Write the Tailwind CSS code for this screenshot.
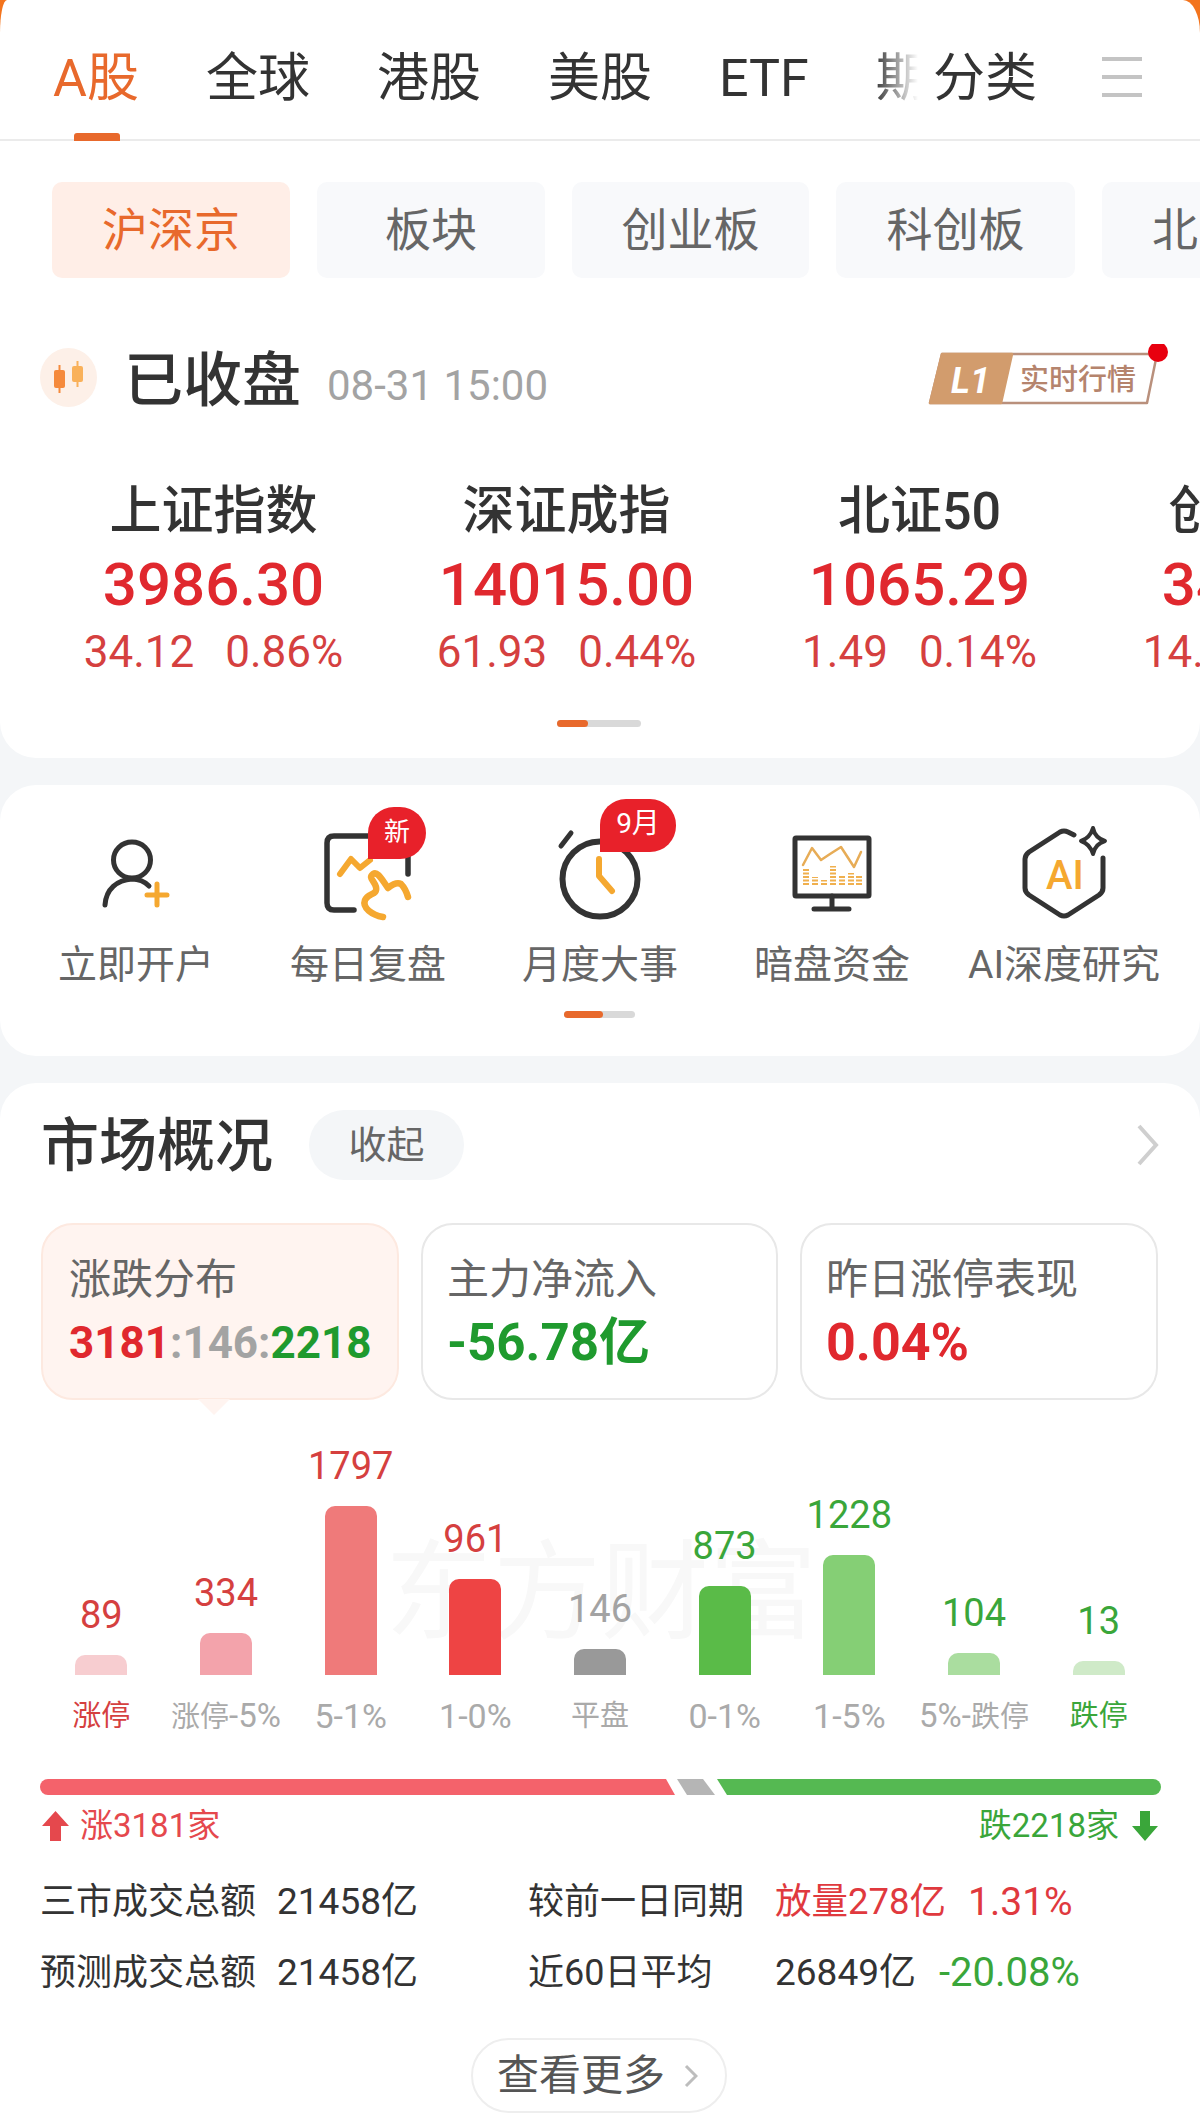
<!DOCTYPE html>
<html lang="zh-CN">
<head>
  <meta charset="UTF-8" />
  <meta name="viewport" content="width=device-width, initial-scale=1.0"/>
  <title>行情</title>
  <script src="https://cdn.jsdelivr.net/npm/@tailwindcss/browser@4"></script>
</head>
<body class="bg-[#f4f6f8]">
<div class="w-[1200px] h-[2128px] overflow-hidden bg-[#f4f6f8] text-[#333] font-['Roboto','Noto_Sans_CJK_SC',sans-serif]">

  <!-- top card -->
  <div class="bg-[linear-gradient(#f3741d_0,#f3741d_40px,#f4f6f8_40px)]">
    <section class="h-[758px] bg-white rounded-tl-[7px_33px] rounded-tr-[17px_33px] rounded-b-[36px] overflow-hidden">
      <header class="relative h-[141px] border-b-2 border-[#ebebeb] flex items-start pt-[46px] text-[52px] leading-[66px]">
        <div class="relative w-[918px] overflow-hidden flex gap-[67px] pl-[53px] whitespace-nowrap">
          <span class="text-[#e8692c]">A股</span>
          <span>全球</span>
          <span>港股</span>
          <span>美股</span>
          <span>ETF</span>
          <span>期货</span>
          <div class="absolute right-0 top-0 h-full w-[40px] bg-gradient-to-r from-white/10 to-white"></div>
        </div>
        <span class="ml-[15px]">分类</span>
        <div class="ml-[65px] mt-[11px] w-[40px] flex flex-col gap-[14px]">
          <div class="h-[4px] bg-[#c4c4c4]"></div>
          <div class="h-[4px] bg-[#c4c4c4]"></div>
          <div class="h-[4px] bg-[#c4c4c4]"></div>
        </div>
        <div class="absolute left-[74px] bottom-[-2px] w-[46px] h-[8px] rounded-t-[3px] bg-[#e8692c]"></div>
      </header>

      <div class="mt-[41px] pl-[52px] flex gap-[27px] h-[96px] text-[46px] text-[#666] whitespace-nowrap">
        <div class="w-[238px] shrink-0 rounded-[10px] bg-[#ffeee7] text-[#e8692c] flex items-center justify-center">沪深京</div>
        <div class="w-[228px] shrink-0 rounded-[10px] bg-[#f8f9fb] flex items-center justify-center">板块</div>
        <div class="w-[237px] shrink-0 rounded-[10px] bg-[#f8f9fb] flex items-center justify-center">创业板</div>
        <div class="w-[239px] shrink-0 rounded-[10px] bg-[#f8f9fb] flex items-center justify-center">科创板</div>
        <div class="w-[228px] shrink-0 rounded-[10px] bg-[#f8f9fb] flex items-center justify-start pl-[50px]">北交所</div>
      </div>

      <div class="relative mt-[70px] h-[59px] pl-[40px] flex items-center">
        <svg width="57" height="59" viewBox="40 348 57 59">
          <ellipse cx="68.5" cy="377.5" rx="28.5" ry="29.5" fill="#fdf0e8"/>
          <path d="M59.5 365v28" stroke="#f58a3c" stroke-width="2"/>
          <rect x="54" y="370" width="11" height="18" rx="2" fill="#f58a3c"/>
          <path d="M77.5 361v26" stroke="#f9b15a" stroke-width="2"/>
          <rect x="72" y="366" width="11" height="16" rx="2" fill="#f9b15a"/>
        </svg>
        <span class="ml-[27px] mt-[5px] text-[59px] leading-[59px] font-medium">已收盘</span>
        <span class="ml-[26px] mt-[16px] text-[42px] text-[#a3a3a3]">08-31 15:00</span>
        <svg class="absolute left-[925px] top-[-4px]" width="245" height="65" viewBox="925 343 245 65">
          <path d="M942 353H1157L1147 402H930Z" fill="#fff" stroke="#b9907c" stroke-width="2.5" stroke-linejoin="round"/>
          <path d="M942 353H1012L1001 402H930Z" fill="#d29c6d" stroke="#d29c6d" stroke-width="2.5" stroke-linejoin="round"/>
          <text x="951" y="392" font-size="36" font-weight="700" font-style="italic" fill="#fff">L1</text>
          <text x="1020" y="389" font-size="29" font-weight="500" fill="#b5846d">实时行情</text>
          <circle cx="1158" cy="351" r="10" fill="#e8000f"/>
        </svg>
      </div>

      <div class="mt-[75px] pl-[37px] flex whitespace-nowrap text-center">
        <div class="w-[353px] shrink-0">
          <div class="h-[56px] leading-[60px] text-[52px] font-medium">上证指数</div>
          <div class="mt-[11px] h-[70px] leading-[72px] text-[60px] font-medium text-[#e0282e]">3986.30</div>
          <div class="mt-[8px] h-[50px] leading-[50px] text-[44px] text-[#d5403f] flex justify-center gap-[31px]"><span>34.12</span><span>0.86%</span></div>
        </div>
        <div class="w-[353px] shrink-0">
          <div class="h-[56px] leading-[60px] text-[52px] font-medium">深证成指</div>
          <div class="mt-[11px] h-[70px] leading-[72px] text-[60px] font-medium text-[#e0282e]">14015.00</div>
          <div class="mt-[8px] h-[50px] leading-[50px] text-[44px] text-[#d5403f] flex justify-center gap-[31px]"><span>61.93</span><span>0.44%</span></div>
        </div>
        <div class="w-[353px] shrink-0">
          <div class="h-[56px] leading-[60px] text-[52px] font-medium">北证50</div>
          <div class="mt-[11px] h-[70px] leading-[72px] text-[60px] font-medium text-[#e0282e]">1065.29</div>
          <div class="mt-[8px] h-[50px] leading-[50px] text-[44px] text-[#d5403f] flex justify-center gap-[31px]"><span>1.49</span><span>0.14%</span></div>
        </div>
        <div class="w-[353px] shrink-0">
          <div class="h-[56px] leading-[60px] text-[52px] font-medium">创业板指</div>
          <div class="mt-[11px] h-[70px] leading-[72px] text-[60px] font-medium text-[#e0282e]">3412.56</div>
          <div class="mt-[8px] h-[50px] leading-[50px] text-[44px] text-[#d5403f] flex justify-center gap-[31px]"><span>14.85</span><span>0.44%</span></div>
        </div>
      </div>

      <div class="mt-[43px] mx-auto w-[84px] h-[7px] rounded-full bg-[#d9d9d9] translate-x-[-1px]">
        <div class="w-[31px] h-full rounded-full bg-[#e8692c]"></div>
      </div>
    </section>
  </div>

  <!-- quick entries -->
  <section class="mt-[27px] h-[271px] bg-white rounded-[36px] pt-[15px] px-[20px]">
    <div class="grid grid-cols-[repeat(5,232px)] text-center text-[39px] leading-[46px] text-[#666] whitespace-nowrap">
      <div class="relative">
        <svg class="block" width="232" height="125" viewBox="20 800 232 125" fill="none" stroke-linecap="round" stroke-linejoin="round">
          <ellipse cx="132" cy="860" rx="18.500" ry="18" stroke="#333" stroke-width="5"/>
          <path d="M105 905C106 889 117 880 132 879C139 879 145 882 149 886" stroke="#333" stroke-width="5"/>
          <path d="M157 884V905M147 895H167" stroke="#f5a830" stroke-width="5"/>
        </svg>
        <div class="mt-[17px]">立即开户</div>
      </div>
      <div class="relative">
        <svg class="block" width="232" height="125" viewBox="252 800 232 125" fill="none" stroke-linecap="round" stroke-linejoin="round">
          <path d="M354 910H334Q327 910 327 903V843Q327 836 334 836H400Q408 836 408 843V874" stroke="#333" stroke-width="5.500"/>
          <path d="M340 874L351 859L360 868L370 860" stroke="#f5a830" stroke-width="6"/>
          <path d="M383 917C372 915 362 908 365 900C368 893 378 895 376 887C374 880 368 878 373 874C378 871 382 880 388 888C393 884 397 882 401 884C404 887 406 890 408 897" stroke="#f5a830" stroke-width="6.500"/>
        </svg>
        <span class="absolute left-[116px] top-[7px] w-[58px] h-[52px] rounded-[29px] rounded-bl-none bg-[#e8212a] text-white text-[26px] leading-[50px]">新</span>
        <div class="mt-[17px]">每日复盘</div>
      </div>
      <div class="relative">
        <svg class="block" width="232" height="125" viewBox="484 800 232 125" fill="none" stroke-linecap="round" stroke-linejoin="round">
          <circle cx="600" cy="879" r="37.500" stroke="#333" stroke-width="6"/>
          <path d="M561 846L571 833" stroke="#333" stroke-width="5"/>
          <path d="M599 859V876L612 891" stroke="#f5a830" stroke-width="6"/>
        </svg>
        <span class="absolute left-[116px] top-[-1px] w-[76px] h-[53px] rounded-[26px] rounded-bl-none bg-[#e8212a] text-white text-[28px] leading-[50px]">9月</span>
        <div class="mt-[17px]">月度大事</div>
      </div>
      <div class="relative">
        <svg class="block" width="232" height="125" viewBox="716 800 232 125" fill="none" stroke-linecap="round" stroke-linejoin="round">
          <rect x="795" y="838" width="74" height="58" rx="1" stroke="#333" stroke-width="5"/>
          <path d="M832 896V908M814 909H849" stroke="#333" stroke-width="5"/>
          <path d="M803 865L812 848L821 860L830 854L841 847L854 867L861 852" stroke="#e7ac56" stroke-width="2.500"/>
          <g stroke="#f0b04e" stroke-width="6" stroke-dasharray="2 1.500" stroke-linecap="butt">
            <path d="M806 885V869"/><path d="M815 885V877"/><path d="M824 885V880"/><path d="M833 885V866"/><path d="M842 885V876"/><path d="M851 885V873"/><path d="M859 885V875"/>
          </g>
        </svg>
        <div class="mt-[17px]">暗盘资金</div>
      </div>
      <div class="relative">
        <svg class="block" width="232" height="125" viewBox="948 800 232 125" fill="none" stroke-linecap="round" stroke-linejoin="round">
          <path d="M1074 835L1068 832Q1064 830 1060 832L1029 852Q1025 855 1025 859V888Q1025 892 1029 895L1060 915Q1064 917 1068 915L1099 895Q1103 892 1103 888V858" stroke="#333" stroke-width="5"/>
          <path d="M1093 828Q1095 838 1105 841Q1095 844 1093 854Q1090 844 1081 841Q1090 838 1093 828Z" stroke="#333" stroke-width="4"/>
          <text x="1065" y="889" text-anchor="middle" font-size="40" font-weight="500" fill="#f5a830" stroke="none">AI</text>
        </svg>
        <div class="mt-[17px]">AI深度研究</div>
      </div>
    </div>
    <div class="mt-[23px] ml-[544px] w-[71px] h-[7px] rounded-full bg-[#d9d9d9]">
      <div class="w-[39px] h-full rounded-full bg-[#e8692c]"></div>
    </div>
  </section>

  <!-- market overview -->
  <section class="relative mt-[27px] h-[1045px] bg-white rounded-t-[36px] pt-[27px]">
    <div class="flex items-center h-[70px] pl-[41px]">
      <h2 class="mt-[3px] text-[58px] font-medium">市场概况</h2>
      <span class="ml-[36px] w-[155px] h-[70px] rounded-full bg-[#f4f6f8] text-[38px] text-[#666] flex items-center justify-center">收起</span>
      <svg class="ml-auto mr-[40px]" width="24" height="42" viewBox="0 0 24 42" fill="none"><path d="M3 2L20 21L3 40" stroke="#cfcfcf" stroke-width="4"/></svg>
    </div>

    <div class="relative mt-[43px] ml-[41px] grid grid-cols-[358px_357px_358px] gap-x-[22px] h-[177px]">
      <div class="relative rounded-[32px] border-2 border-[#fde9e0] bg-[#fff4f0] pl-[26px] pt-[30px]">
        <div class="text-[42px] leading-[50px] text-[#666]">涨跌分布</div>
        <div class="mt-[12px] text-[44px] leading-[52px] font-bold whitespace-nowrap"><span class="text-[#e0282e]">3181</span><span class="text-[#a3a3a3]">:146:</span><span class="text-[#1f9a2e]">2218</span></div>
        <div class="absolute left-[155px] bottom-[-17px] w-[32px] h-[16px] bg-[#fff4f0] [clip-path:polygon(0_0,100%_0,50%_100%)]"></div>
      </div>
      <div class="rounded-[32px] border-2 border-[#e8e8e8] pl-[24px] pt-[30px]">
        <div class="text-[42px] leading-[50px] text-[#666]">主力净流入</div>
        <div class="mt-[12px] text-[51px] leading-[52px] font-bold text-[#1f9a2e]">-56.78亿</div>
      </div>
      <div class="rounded-[32px] border-2 border-[#e8e8e8] pl-[24px] pt-[30px]">
        <div class="text-[42px] leading-[50px] text-[#666]">昨日涨停表现</div>
        <div class="mt-[12px] text-[52px] leading-[52px] font-bold text-[#e0282e]">0.04%</div>
      </div>
    </div>

    <!-- watermark under the bars -->
    <div class="absolute left-[385px] top-[450px] text-[108px] leading-[120px] text-[#f8f8f8] whitespace-nowrap">东方财富</div>

    <div class="relative ml-[39px] w-[1122px] h-[275px] grid grid-cols-9 items-end text-center text-[38px] leading-[38px]">
      <div class="flex flex-col items-center"><span class="mb-[21px] text-[#d5403f]">89</span><div class="w-[52px] h-[20px] rounded-t-[10px] bg-[#f7cdd0]"></div></div>
      <div class="flex flex-col items-center"><span class="mb-[21px] text-[#d5403f]">334</span><div class="w-[52px] h-[42px] rounded-t-[10px] bg-[#f3a3ab]"></div></div>
      <div class="flex flex-col items-center"><span class="mb-[21px] text-[#d5403f]">1797</span><div class="w-[52px] h-[169px] rounded-t-[10px] bg-[#ef7a7a]"></div></div>
      <div class="flex flex-col items-center"><span class="mb-[21px] text-[#d5403f]">961</span><div class="w-[52px] h-[96px] rounded-t-[10px] bg-[#ee4444]"></div></div>
      <div class="flex flex-col items-center"><span class="mb-[21px] text-[#a3a3a3]">146</span><div class="w-[52px] h-[26px] rounded-t-[10px] bg-[#999]"></div></div>
      <div class="flex flex-col items-center"><span class="mb-[21px] text-[#3aa63a]">873</span><div class="w-[52px] h-[89px] rounded-t-[10px] bg-[#5abb48]"></div></div>
      <div class="flex flex-col items-center"><span class="mb-[21px] text-[#3aa63a]">1228</span><div class="w-[52px] h-[120px] rounded-t-[10px] bg-[#85cf75]"></div></div>
      <div class="flex flex-col items-center"><span class="mb-[21px] text-[#3aa63a]">104</span><div class="w-[52px] h-[22px] rounded-t-[10px] bg-[#aadd9f]"></div></div>
      <div class="flex flex-col items-center"><span class="mb-[21px] text-[#3aa63a]">13</span><div class="w-[52px] h-[14px] rounded-t-[10px] bg-[#cfeac8]"></div></div>
    </div>

    <div class="relative ml-[39px] mt-[21px] w-[1122px] h-[40px] grid grid-cols-9 text-center text-[29px] leading-[40px] text-[#aaa] whitespace-nowrap">
      <span class="text-[#d5403f]">涨停</span>
      <span>涨停<span class="text-[33px]">-5%</span></span>
      <span class="text-[34px]">5-1%</span>
      <span class="text-[34px]">1-0%</span>
      <span>平盘</span>
      <span class="text-[34px]">0-1%</span>
      <span class="text-[34px]">1-5%</span>
      <span><span class="text-[33px]">5%-</span>跌停</span>
      <span class="text-[#3aa63a]">跌停</span>
    </div>

    <div class="relative mt-[43px] ml-[40px] w-[1121px] h-[16px] rounded-full overflow-hidden">
      <div class="absolute inset-y-0 left-0 w-[635px] bg-[#f4626b] [clip-path:polygon(0_0,626px_0,100%_100%,0_100%)]"></div>
      <div class="absolute inset-y-0 left-[637px] w-[38px] bg-[#b5b5b5] [clip-path:polygon(0_0,26px_0,100%_100%,10px_100%)]"></div>
      <div class="absolute inset-y-0 left-[677px] right-0 bg-[#55b952] [clip-path:polygon(0_0,100%_0,100%_100%,10px_100%)]"></div>
    </div>

    <div class="mt-[11px] h-[40px] px-[42px] flex items-center justify-between text-[33px] leading-[40px]">
      <div class="flex items-center text-[#e5484d]">
        <svg width="27" height="30" viewBox="0 0 27 30"><path d="M13.500 0L27 15H19V30H8V15H0Z" fill="#e5484d"/></svg>
        <span class="ml-[11px]">涨3181家</span>
      </div>
      <div class="flex items-center text-[#3aa63a]">
        <span class="mr-[13px]">跌2218家</span>
        <svg width="26" height="30" viewBox="0 0 26 30"><path d="M13 30L0 15H8V0H18V15H26Z" fill="#3aa63a"/></svg>
      </div>
    </div>

    <div class="mt-[32px] pl-[40px] grid grid-cols-[237px_251px_247px_1fr] gap-y-[23px] text-[36px] leading-[48px] whitespace-nowrap">
      <span>三市成交总额</span>
      <span class="text-[37px]">21458亿</span>
      <span>较前一日同期</span>
      <span class="flex gap-[22px] text-[#e0393e]"><span class="text-[36.5px]">放量278亿</span><span class="text-[39px]">1.31%</span></span>
      <span>预测成交总额</span>
      <span class="text-[37px]">21458亿</span>
      <span>近60日平均</span>
      <span class="flex gap-[23px]"><span class="text-[37px]">26849亿</span><span class="text-[40px] text-[#3aa63a]">-20.08%</span></span>
    </div>

    <div class="mt-[41px] ml-[471px] w-[256px] h-[75px] rounded-full border-2 border-[#eeeeee] flex items-center pl-[24px] text-[42px] text-[#555]">
      <span>查看更多</span>
      <svg class="ml-[19px]" width="14" height="24" viewBox="0 0 14 24" fill="none"><path d="M2 2L12 12L2 22" stroke="#bdbdbd" stroke-width="3"/></svg>
    </div>
  </section>
</div>
</body>
</html>
